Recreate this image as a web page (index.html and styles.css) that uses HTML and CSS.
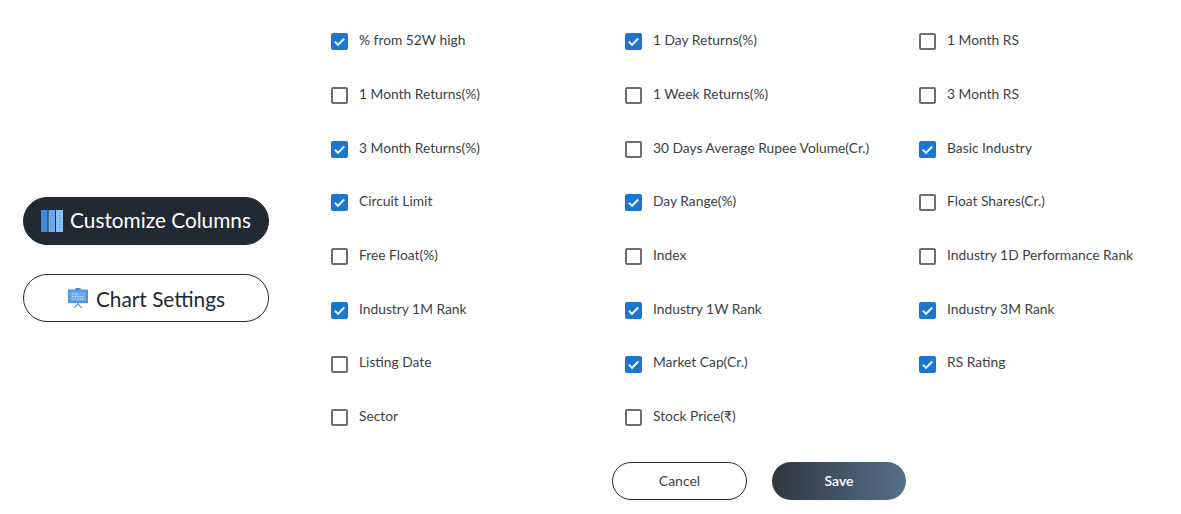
FILE: index.html
```html
<!DOCTYPE html>
<html lang="en">
<head>
<meta charset="utf-8">
<title>Customize Columns</title>
<link rel="stylesheet" href="styles.css">
</head>
<body>
<div class="page">
  <aside class="side">
    <button class="tab tab-active">
      <svg class="ico" width="22" height="22" viewBox="0 0 22 22"><rect x="0" y="0" width="6.500" height="22" fill="#3f8ae0"/><rect x="7.500" y="0" width="6.500" height="22" fill="#6aaaf0"/><rect x="15" y="0" width="7" height="22" fill="#8cc0f5"/><path d="M3 2v18M10.500 2v18M18.500 2v18" stroke="#2f76cc" stroke-width="1" stroke-dasharray="1 2" opacity=".7"/></svg>
      <span class="tab-label">Customize Columns</span>
    </button>
    <button class="tab">
      <svg class="ico" width="22" height="20" viewBox="0 0 22 20"><rect x="8.500" y="0" width="5" height="2" fill="#3f8ae0"/><rect x="1" y="1.500" width="20" height="13.500" fill="#4d94e6"/><rect x="3" y="3.500" width="16" height="9.500" fill="#6aaaf0"/><path d="M5 6h6M5 8.500h12M5 11h12" stroke="#cfe4fb" stroke-width="1" stroke-dasharray="1.500 1"/><path d="M11 15v1.500M11 16l-4 4M11 16l4 4" stroke="#5aa0ee" stroke-width="1.300" fill="none"/></svg>
      <span class="tab-label tab-label-low">Chart Settings</span>
    </button>
  </aside>
  <main class="main">
    <div class="grid">
      <label class="opt"><span class="box on"><svg viewBox="0 0 18 18"><path d="M4 9.200l3.400 3.300L14 5.800" fill="none" stroke="#fff" stroke-width="2"/></svg></span>% from 52W high</label>
      <label class="opt"><span class="box on"><svg viewBox="0 0 18 18"><path d="M4 9.200l3.400 3.300L14 5.800" fill="none" stroke="#fff" stroke-width="2"/></svg></span>1 Day Returns(%)</label>
      <label class="opt"><span class="box"></span>1 Month RS</label>
      <label class="opt"><span class="box"></span>1 Month Returns(%)</label>
      <label class="opt"><span class="box"></span>1 Week Returns(%)</label>
      <label class="opt"><span class="box"></span>3 Month RS</label>
      <label class="opt"><span class="box on"><svg viewBox="0 0 18 18"><path d="M4 9.200l3.400 3.300L14 5.800" fill="none" stroke="#fff" stroke-width="2"/></svg></span>3 Month Returns(%)</label>
      <label class="opt"><span class="box"></span>30 Days Average Rupee Volume(Cr.)</label>
      <label class="opt"><span class="box on"><svg viewBox="0 0 18 18"><path d="M4 9.200l3.400 3.300L14 5.800" fill="none" stroke="#fff" stroke-width="2"/></svg></span>Basic Industry</label>
      <label class="opt"><span class="box on"><svg viewBox="0 0 18 18"><path d="M4 9.200l3.400 3.300L14 5.800" fill="none" stroke="#fff" stroke-width="2"/></svg></span>Circuit Limit</label>
      <label class="opt"><span class="box on"><svg viewBox="0 0 18 18"><path d="M4 9.200l3.400 3.300L14 5.800" fill="none" stroke="#fff" stroke-width="2"/></svg></span>Day Range(%)</label>
      <label class="opt"><span class="box"></span>Float Shares(Cr.)</label>
      <label class="opt"><span class="box"></span>Free Float(%)</label>
      <label class="opt"><span class="box"></span>Index</label>
      <label class="opt"><span class="box"></span>Industry 1D Performance Rank</label>
      <label class="opt"><span class="box on"><svg viewBox="0 0 18 18"><path d="M4 9.200l3.400 3.300L14 5.800" fill="none" stroke="#fff" stroke-width="2"/></svg></span>Industry 1M Rank</label>
      <label class="opt"><span class="box on"><svg viewBox="0 0 18 18"><path d="M4 9.200l3.400 3.300L14 5.800" fill="none" stroke="#fff" stroke-width="2"/></svg></span>Industry 1W Rank</label>
      <label class="opt"><span class="box on"><svg viewBox="0 0 18 18"><path d="M4 9.200l3.400 3.300L14 5.800" fill="none" stroke="#fff" stroke-width="2"/></svg></span>Industry 3M Rank</label>
      <label class="opt"><span class="box"></span>Listing Date</label>
      <label class="opt"><span class="box on"><svg viewBox="0 0 18 18"><path d="M4 9.200l3.400 3.300L14 5.800" fill="none" stroke="#fff" stroke-width="2"/></svg></span>Market Cap(Cr.)</label>
      <label class="opt"><span class="box on"><svg viewBox="0 0 18 18"><path d="M4 9.200l3.400 3.300L14 5.800" fill="none" stroke="#fff" stroke-width="2"/></svg></span>RS Rating</label>
      <label class="opt"><span class="box"></span>Sector</label>
      <label class="opt"><span class="box"></span>Stock Price(₹)</label>
    </div>
    <div class="actions">
      <button class="btn btn-cancel">Cancel</button>
      <button class="btn btn-save">Save</button>
    </div>
  </main>
</div>
</body>
</html>
```
FILE: styles.css
```css
* { box-sizing: border-box; }
html, body { margin: 0; height: 100%; background: #fff; overflow: hidden; }
body { font-family: "Lato", "Noto Sans", sans-serif; color: #212a33; }
.page { display: flex; height: 514px; }
.side { width: 331px; padding: 197px 0 0 23px; display: flex; flex-direction: column; gap: 29px; flex: none; }
.tab { width: 246px; height: 48px; border-radius: 24px; border: 1px solid #212a33; background: #fff; color: #212a33; font: 400 20.8px "Lato", sans-serif; display: flex; align-items: center; justify-content: center; gap: 7px; padding: 0; }
.tab-active { background: #212a33; color: #fff; }
.tab-label { position: relative; top: -2px; }
.tab-label-low { top: 0; }
.main { flex: 1; padding-top: 14.4px; }
.grid { display: grid; grid-template-columns: 294px 294px 1fr; grid-auto-rows: 53.7px; }
.opt { display: flex; align-items: center; gap: 11px; font-size: 13.8px; color: #3a3f45; line-height: 18px; padding-bottom: 2px; }
.box { width: 17px; height: 17px; border: 2px solid #6e6e6e; border-radius: 2px; flex: none; margin-top: 3px; position: relative; top: 0.2px; }
.box.on { background: #1976d2; border-color: #1976d2; }
.box svg { position: absolute; left: -2px; top: -2px; width: 17px; height: 17px; display: block; }
.actions { display: flex; justify-content: flex-start; gap: 25px; margin: 17.8px 0 0 281px; }
.btn { width: 135px; height: 38px; border-radius: 19px; font: 400 14px "Lato", sans-serif; padding: 0; }
.btn-cancel { background: #fff; border: 1px solid #212a33; color: #3a3f45; }
.btn-save { width: 134px; background: linear-gradient(90deg, #30363f, #56708c); border: none; color: #fff; font-weight: 600; }
```
